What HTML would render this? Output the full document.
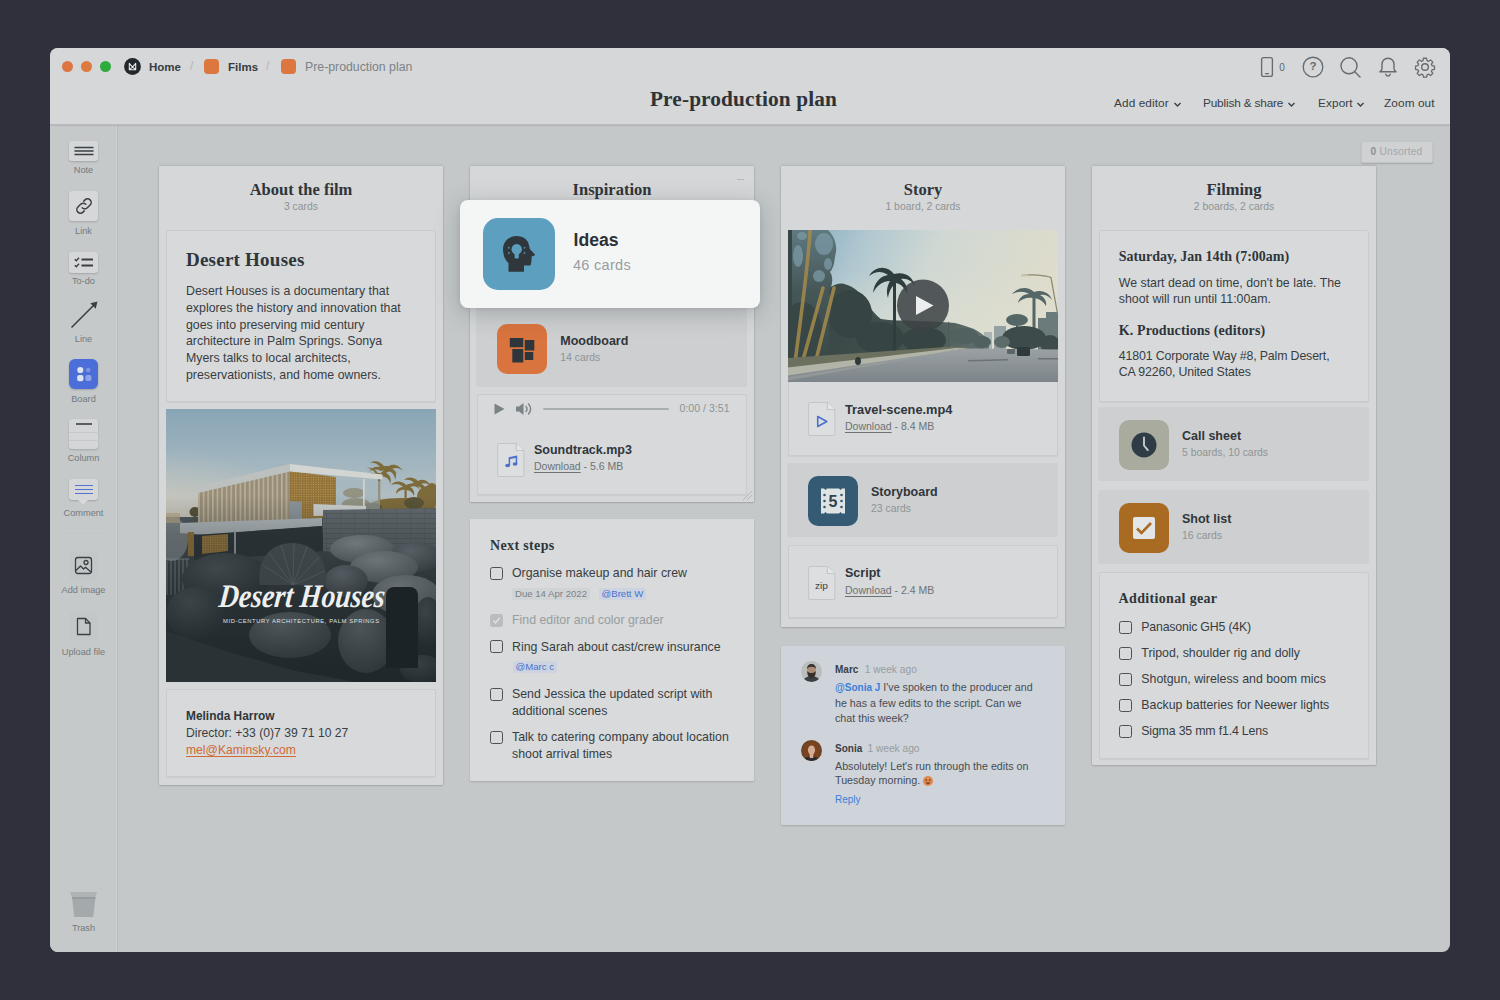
<!DOCTYPE html>
<html lang="en">
<head>
<meta charset="utf-8">
<title>Pre-production plan</title>
<style>
*{box-sizing:border-box;margin:0;padding:0}
html,body{width:1500px;height:1000px;overflow:hidden}
body{background:#2f303b;font-family:"Liberation Sans",Arial,sans-serif;color:#31373c;position:relative;-webkit-font-smoothing:antialiased}
.abs{position:absolute}
.serif{font-family:"Liberation Serif","DejaVu Serif",serif;font-weight:700}
#win{position:absolute;left:50px;top:48px;width:1400px;height:904px;border-radius:8px;background:#c4c8c9;overflow:hidden}
#hdr{position:absolute;left:0;top:0;width:1400px;height:77px;background:#d5d7d8;border-bottom:1px solid #b7babc;box-shadow:0 1px 1.5px rgba(0,0,0,.10);z-index:5}
#side{position:absolute;left:0;top:77px;width:68px;height:827px;background:#c5c9ca;border-right:1px solid #b9bdbf;box-shadow:inset -2px 0 0 -1px #cdd0d1}
.t{position:absolute;white-space:nowrap;line-height:1}
.dot{position:absolute;width:11.4px;height:11.4px;border-radius:50%;top:12.6px}
.crumb{font-size:11.5px;font-weight:700;color:#363c41;top:13.5px}
.sl{color:#b3b7b9;font-size:12px;top:12px;font-weight:400}
.sq{position:absolute;width:15px;height:15px;border-radius:4px;background:#dc773f;top:11.2px}
.menu{font-size:11.8px;color:#3a4045;top:50px;letter-spacing:.1px}
.tool{position:absolute;left:18.5px;width:29.5px;background:#d5d7d8;border-radius:3px;box-shadow:0 1px 2px rgba(0,0,0,.18)}
.tl{position:absolute;left:0;width:67px;text-align:center;font-size:9.2px;color:#737a7d;line-height:1}
.col{position:absolute;width:284px;background:#d5d7d8;box-shadow:0 0 0 .5px rgba(0,0,0,.05),0 -1px 3px rgba(0,0,0,.07),0 1px 2px rgba(0,0,0,.14);border-radius:1px}
.ct{position:absolute;left:0;width:284px;text-align:center;font-size:16.5px;top:15.6px;line-height:1;color:#2f353a}
.cs{position:absolute;left:0;width:284px;text-align:center;font-size:10.4px;top:36px;line-height:1;color:#8d9497}
.card{position:absolute;left:7px;width:270px;background:#d7d9da;border:1px solid #c9cccd;border-radius:2px;box-shadow:0 1px 1px rgba(0,0,0,.05)}
.bcard{position:absolute;left:7px;width:270px;background:#cdcfd0;border-radius:2px;box-shadow:-.8px 0 0 #cdcfd0}
.p{position:absolute;font-size:12.35px;line-height:16.8px;color:#373d42;white-space:nowrap}
.h{position:absolute;white-space:nowrap;line-height:1;color:#2f353a}
.cb{position:absolute;width:13px;height:13px;border:1.3px solid #4b5155;border-radius:2.5px}
.bt{position:absolute;font-size:12.5px;font-weight:700;color:#30363b;line-height:1;white-space:nowrap}
.bs{position:absolute;font-size:10.4px;color:#8d9497;line-height:1;white-space:nowrap}
.ic{position:absolute;width:50px;height:50px;border-radius:10px}
.dl{position:absolute;font-size:10.5px;color:#6c7377;line-height:1;white-space:nowrap;margin-top:-.5px}
.dl u{text-decoration:underline;text-underline-offset:1.5px}
</style>
</head>
<body>
<div id="win">
<!-- HEADER -->
<div id="hdr">
  <div class="dot" style="left:11.700px;background:#dd7540"></div>
  <div class="dot" style="left:31px;background:#dd7a3d"></div>
  <div class="dot" style="left:49.5px;background:#2eab3c"></div>
  <svg class="abs" style="left:74px;top:9.5px" width="17" height="17" viewBox="0 0 17 17"><circle cx="8.500" cy="8.500" r="8.400" fill="#23282d"/><path d="M5.300 11.700V5.300L8.500 9.200L11.700 5.300V11.700ZM5.300 11.700L8.500 9.200L11.700 11.700" fill="none" stroke="#e9ebec" stroke-width="1.050" stroke-linejoin="round"/></svg>
  <div class="t crumb" style="left:99px">Home</div>
  <div class="t sl" style="left:140px">/</div>
  <div class="sq" style="left:154.200px"></div>
  <div class="t crumb" style="left:178px">Films</div>
  <div class="t sl" style="left:216px">/</div>
  <div class="sq" style="left:230.600px"></div>
  <div class="t crumb" style="left:255px;color:#7c8387;font-weight:400;font-size:12.300px;top:13px">Pre-production plan</div>
  <div class="t serif" id="title" style="left:0;width:1387px;text-align:center;top:40.500px;font-size:21.300px;letter-spacing:.14px;color:#2d3338">Pre-production plan</div>
  <!-- right icons -->
  <svg class="abs" style="left:1207px;top:6.500px" width="22" height="24" viewBox="0 0 22 24" fill="none" stroke="#666c70" stroke-width="1.350"><rect x="4.6" y="2.6" width="10.8" height="18.8" rx="2"/><path d="M8.5 18.6h3" stroke-linecap="round"/></svg>
  <div class="t" style="left:1229.200px;top:14.500px;font-size:10px;color:#5f666a">0</div>
  <svg class="abs" style="left:1251px;top:6.500px" width="24" height="24" viewBox="0 0 24 24" fill="none" stroke="#666c70" stroke-width="1.350"><circle cx="12" cy="12" r="9.8"/></svg>
  <div class="t" style="left:1259.500px;top:13.300px;font-size:11.500px;color:#666c70;font-weight:700">?</div>
  <svg class="abs" style="left:1288px;top:6.500px" width="24" height="24" viewBox="0 0 24 24" fill="none" stroke="#666c70" stroke-width="1.400" stroke-linecap="round"><circle cx="11" cy="10.8" r="8"/><path d="M17 17l5 5"/></svg>
  <svg class="abs" style="left:1326px;top:6.500px" width="24" height="24" viewBox="0 0 24 24" fill="none" stroke="#666c70" stroke-width="1.400" stroke-linecap="round" stroke-linejoin="round"><path d="M12 3.2c-3.6 0-6 2.7-6 6v4.2c0 1.600-.9 2.6-2.200 3.400h16.400c-1.300-.8-2.200-1.800-2.200-3.400V9.200c0-3.300-2.400-6-6-6z"/><path d="M9.800 19.300c.3 1.100 1.100 1.800 2.200 1.800s1.900-.7 2.200-1.800"/></svg>
  <svg class="abs" style="left:1363px;top:6.500px" width="24" height="24" viewBox="0 0 24 24" fill="none" stroke="#666c70" stroke-width="1.400" stroke-linejoin="round"><circle cx="12" cy="12" r="3.300"/><path d="M10.300 2.500h3.400l.5 2.600 1.700.7 2.200-1.500 2.400 2.400-1.500 2.200.7 1.700 2.600.5v3.400l-2.600.5-.7 1.700 1.500 2.200-2.400 2.400-2.200-1.500-1.700.7-.5 2.600h-3.400l-.5-2.600-1.700-.7-2.200 1.500-2.400-2.400 1.500-2.200-.7-1.700-2.600-.5v-3.400l2.600-.5.7-1.700-1.500-2.200 2.400-2.400 2.200 1.500 1.700-.7z" transform="translate(12 12) scale(.92) translate(-12 -12)"/></svg>
  <!-- menu -->
  <div class="t menu" style="left:1064px">Add editor</div>
  <svg class="abs" style="left:1123px;top:53px" width="9" height="7" viewBox="0 0 9 7" fill="none" stroke="#3a4045" stroke-width="1.400"><path d="M1.500 2l3 3 3-3"/></svg>
  <div class="t menu" style="left:1153px;letter-spacing:-.16px">Publish &amp; share</div>
  <svg class="abs" style="left:1237px;top:53px" width="9" height="7" viewBox="0 0 9 7" fill="none" stroke="#3a4045" stroke-width="1.400"><path d="M1.500 2l3 3 3-3"/></svg>
  <div class="t menu" style="left:1268px">Export</div>
  <svg class="abs" style="left:1306px;top:53px" width="9" height="7" viewBox="0 0 9 7" fill="none" stroke="#3a4045" stroke-width="1.400"><path d="M1.500 2l3 3 3-3"/></svg>
  <div class="t menu" style="left:1334px">Zoom out</div>
</div>
<!-- SIDEBAR -->
<div id="side">
  <!-- coordinates relative to #side (page y - 125, page x - 50) -->
  <div class="tool" style="top:15.500px;height:20.500px"><svg style="position:absolute;left:0;top:-1px" width="30" height="22" viewBox="0 0 30 22" stroke="#3a4045" stroke-width="1.300"><path d="M5.500 7.500h19M5.500 11h19M5.500 14.500h19"/></svg></div>
  <div class="tl" style="top:40.800px">Note</div>
  <div class="tool" style="top:66px;height:30px"><svg width="30" height="30" viewBox="0 0 30 30" fill="none" stroke="#3a4045" stroke-width="1.500" stroke-linecap="round"><path d="M13.200 16.800a3.600 3.600 0 0 0 5.100 0l2.800-2.800a3.600 3.600 0 0 0-5.100-5.100l-1.200 1.200"/><path d="M16.800 13.200a3.600 3.600 0 0 0-5.100 0l-2.800 2.800a3.600 3.600 0 0 0 5.100 5.100l1.200-1.200"/></svg></div>
  <div class="tl" style="top:102px">Link</div>
  <div class="tool" style="top:127px;height:21px"><svg width="30" height="21" viewBox="0 0 30 21" fill="none" stroke="#3a4045" stroke-width="1.400"><path d="M12.500 7.500h11.500M12.500 13.500h11.500" stroke-width="1.800"/><path d="M5.800 7.200l1.500 1.500 2.700-3M5.800 13.200l1.500 1.500 2.700-3"/></svg></div>
  <div class="tl" style="top:152px">To-do</div>
  <svg class="abs" style="left:18px;top:174px" width="32" height="32" viewBox="0 0 32 32" fill="none" stroke="#3a4045" stroke-width="1.600"><path d="M3.500 28.500L27 5"/><path d="M29.500 2.500l-1.800 7.200-5.400-5.400z" fill="#3a4045" stroke="none"/></svg>
  <div class="tl" style="top:209.500px">Line</div>
  <div class="tool" style="top:234px;height:30px;background:#4b6ed8;border-radius:6px;box-shadow:0 1px 2px rgba(0,0,0,.2)"><svg width="30" height="30" viewBox="0 0 30 30"><circle cx="11.300" cy="11" r="3.100" fill="#dfe4f2"/><rect x="8.200" y="16" width="6.200" height="6.200" rx="2" fill="#dfe4f2"/><circle cx="19.200" cy="11" r="2.300" fill="#7b95e3"/><rect x="16.400" y="16" width="6" height="6" rx="1.800" fill="#8ea4e6"/></svg></div>
  <div class="tl" style="top:269.500px">Board</div>
  <div class="tool" style="top:294px;height:30px;background:#d4d6d7"><svg width="30" height="30" viewBox="0 0 30 30"><path d="M7 5h16" stroke="#3a4045" stroke-width="1.600"/><path d="M0 13.500h30M0 21.500h30" stroke="#c6c9ca" stroke-width="1"/></svg></div>
  <div class="tl" style="top:329px">Column</div>
  <div class="tool" style="top:354px;height:21px"><svg width="30" height="21" viewBox="0 0 30 21" stroke="#5372d4" stroke-width="1.200"><path d="M6 6.500h18M6 10.500h18M6 14.500h18"/></svg></div>
  <svg class="abs" style="left:28px;top:375px" width="10" height="5" viewBox="0 0 10 5"><path d="M0 0h10l-5 4.500z" fill="#d9dbdc"/></svg>
  <div class="tl" style="top:384px">Comment</div>
  <div class="abs" style="left:13px;top:408px;width:41px;height:1px;background:#c2c6c7"></div>
  <div class="abs" style="left:19px;top:426px;width:29px;height:29px;background:#c4c7c8;border-radius:3px"><svg width="29" height="29" viewBox="0 0 29 29" fill="none" stroke="#3a4045" stroke-width="1.300" stroke-linejoin="round"><rect x="6.500" y="6.500" width="16" height="16" rx="2.500"/><circle cx="17" cy="11.500" r="2"/><path d="M7 19.500l4.500-4.500 3 3 2-1.800 5.500 4.800"/></svg></div>
  <div class="tl" style="top:461px">Add image</div>
  <div class="abs" style="left:19px;top:487px;width:29px;height:29px;background:#c4c7c8;border-radius:3px"><svg width="29" height="29" viewBox="0 0 29 29" fill="none" stroke="#3a4045" stroke-width="1.300" stroke-linejoin="round"><path d="M8.500 6.500h8l4.500 4.500v11.500h-12.500z"/><path d="M16.500 6.500v4.500h4.500"/></svg></div>
  <div class="tl" style="top:522.500px">Upload file</div>
  <svg class="abs" style="left:19px;top:766px" width="30" height="27" viewBox="0 0 30 27"><path d="M1 1h27l-1.500 5h-24z" fill="#aeb3b5"/><path d="M3 6h23.500l-2.300 20h-19z" fill="#a4a9ab"/><path d="M3 6h23.500l-.3 2h-23z" fill="#979c9e"/></svg>
  <div class="tl" style="top:799px">Trash</div>
</div>
<!-- CANVAS -->
<div id="canvas" class="abs" style="left:0;top:0;width:1400px;height:904px">

<!-- COLUMN 1 : About the film -->
<div class="col" style="left:109px;top:118px;height:619px">
  <div class="ct serif">About the film</div>
  <div class="cs">3 cards</div>
  <div class="card" style="top:64px;height:172px">
    <div class="h serif" style="left:19px;top:19px;font-size:19px;letter-spacing:.23px">Desert Houses</div>
    <div class="p" style="left:19px;top:52px">Desert Houses is a documentary that<br>explores the history and innovation that<br>goes into preserving mid century<br>architecture in Palm Springs. Sonya<br>Myers talks to local architects,<br>preservationists, and home owners.</div>
  </div>
  <div class="abs" id="img1" style="left:7px;top:243px;width:270px;height:273px;overflow:hidden;background:#2a3236">
  <svg width="270" height="273" viewBox="0 0 270 273">
    <defs>
      <linearGradient id="sky1" x1="0" y1="0" x2="0" y2="1"><stop offset="0" stop-color="#89a5b5"/><stop offset=".35" stop-color="#9db3be"/><stop offset=".8" stop-color="#bac3c5"/><stop offset="1" stop-color="#c3c5c1"/></linearGradient>
      <radialGradient id="glow1" cx="0" cy="1" r="1"><stop offset="0" stop-color="#d6cbb8" stop-opacity=".9"/><stop offset="1" stop-color="#d6cbb8" stop-opacity="0"/></radialGradient>
      <linearGradient id="rk" x1="0" y1="0" x2="0" y2="1"><stop offset="0" stop-color="#4f585d"/><stop offset=".45" stop-color="#343c41"/><stop offset="1" stop-color="#252c30"/></linearGradient>
      <linearGradient id="dk" x1="0" y1="0" x2="0" y2="1"><stop offset="0" stop-color="#1b2225" stop-opacity="0"/><stop offset=".22" stop-color="#1b2225" stop-opacity=".28"/><stop offset=".6" stop-color="#1b2225" stop-opacity=".4"/><stop offset="1" stop-color="#1b2225" stop-opacity=".5"/></linearGradient>
      <pattern id="slat" width="4.600" height="10" patternUnits="userSpaceOnUse"><rect width="4.600" height="10" fill="#988d76"/><rect x="0" width="1.600" height="10" fill="#b9b29d"/></pattern>
      <pattern id="perf" width="2.400" height="2.400" patternUnits="userSpaceOnUse"><rect width="2.400" height="2.400" fill="#93733a"/><circle cx="1.200" cy="1.200" r=".5" fill="#c9a95e"/></pattern>
      <pattern id="stone" width="14" height="5" patternUnits="userSpaceOnUse"><rect width="14" height="5" fill="#636b70"/><rect y="4.200" width="14" height=".8" fill="#545c61"/><rect x="6" width=".8" height="4.200" fill="#596166"/></pattern>
      <radialGradient id="r1" cx=".4" cy=".3" r=".8"><stop offset="0" stop-color="#949ba0"/><stop offset="1" stop-color="#5a6368"/></radialGradient>
      <radialGradient id="r2" cx=".4" cy=".3" r=".8"><stop offset="0" stop-color="#727a80"/><stop offset="1" stop-color="#3d464b"/></radialGradient>
      <radialGradient id="r3" cx=".4" cy=".3" r=".8"><stop offset="0" stop-color="#515a5f"/><stop offset="1" stop-color="#293135"/></radialGradient>
    </defs>
    <rect width="270" height="130" fill="url(#sky1)"/>
    <rect y="40" width="150" height="90" fill="url(#glow1)"/>
    <rect y="108" width="270" height="165" fill="url(#rk)"/>
    <!-- palms right -->
    <g fill="#7e6b3b"><path d="M213 66c-3-6-8-8-12-7 4 0 7 3 9 6-5-2-9-1-12 3 4-2 9-1 12 1 2-1 5-2 9-1 3 1 5 4 5 7 2-5 0-9-4-11 4-3 9-2 11 1-2-5-8-7-13-4z"/><rect x="212" y="64" width="2.200" height="38"/><path d="M240 76c-5-5-12-4-15 0 5-2 9-1 12 2-4 0-7 3-7 7 2-3 6-5 10-4 4 0 7 3 8 6 1-4-1-8-4-9 4-2 8 0 10 3-1-5-8-8-14-5z"/><rect x="238.500" y="78" width="2.200" height="24"/><ellipse cx="262" cy="88" rx="11" ry="11"/><ellipse cx="188" cy="84" rx="11" ry="5"/><ellipse cx="190" cy="95" rx="14" ry="6"/><ellipse cx="236" cy="97" rx="34" ry="8"/></g>
    <g fill="#7e6b3b"><path d="M222 60c-4-5-10-6-14-3 4-1 8 1 10 4-5-1-9 1-11 5 4-3 8-3 12-1 3-1 7-1 10 1 3 2 4 5 4 8 2-5 1-9-3-11 4-2 8-1 11 2-3-5-9-8-14-5z" transform="translate(-4 -3)"/><path d="M252 72c-4-4-10-5-14-1 4-1 8 0 10 3-4 0-8 3-8 7 3-4 7-5 11-4 4 1 7 4 8 8 1-5 0-9-4-10 4-2 8 0 10 3-2-6-8-9-13-6z"/><ellipse cx="266" cy="82" rx="6" ry="8"/></g><g fill="#5a5436"><ellipse cx="248" cy="94" rx="10" ry="6"/><ellipse cx="206" cy="98" rx="10" ry="4"/></g>
    <g fill="#55503a"><ellipse cx="29" cy="103" rx="5.500" ry="5"/><rect x="28.300" y="103" width="1.500" height="14"/></g>
    <!-- house upper -->
    <polygon points="32,83 124,62 124,111 32,116" fill="url(#slat)"/>
    <polygon points="124,62 170,68 170,108 124,111" fill="url(#perf)"/>
    <polygon points="124,92 136,93 136,110 124,111" fill="#8c959a"/>
    <polygon points="170,70 214,72 214,100 170,100" fill="#a3b5bd" opacity=".55"/>
    <polygon points="32,77.500 124,55 124,62.500 32,84" fill="#bcc0be"/>
    <polygon points="124,55 216.500,65.500 216.500,70.500 124,62.500" fill="#d3d5d2"/>
    <rect x="197" y="70" width="1.800" height="30" fill="#cfd2d0"/>
    <polygon points="147.500,95 200,97 200,106 147.500,107" fill="#cdd1cf"/>
    <!-- bush far left -->
    <ellipse cx="6" cy="130" rx="16" ry="22" fill="#7d8488"/>
    <rect x="0" y="104" width="14" height="10" fill="#b9a98a" opacity=".7"/>
    <!-- deck slab -->
    <polygon points="14,114 156,109 156,117 40,126 14,124" fill="#b4bcc0"/>
    <polygon points="28,126 156,117 158,142 28,152" fill="#2f363a"/>
    <polygon points="36,127 62,125 62,142 36,145" fill="url(#perf)"/>
    <rect x="22" y="123" width="6" height="24" fill="#9a763a"/>
    <rect x="68" y="122" width="2" height="24" fill="#9aa2a6"/>
    <!-- stone wall -->
    <polygon points="157,101 270,99 270,152 157,142" fill="url(#stone)"/>
    <!-- fence -->
    <g stroke="#aeb5b8" stroke-width=".8" opacity=".8"><path d="M1 150v36M5 150v36M9 150v36M13 150v36M17 150v36M21 150v36M0 150h23"/></g>
    <!-- rocks -->
    <ellipse cx="196" cy="140" rx="32" ry="14" fill="url(#r1)"/>
    <ellipse cx="250" cy="148" rx="26" ry="15" fill="url(#r2)"/>
    <ellipse cx="218" cy="158" rx="34" ry="16" fill="url(#r1)"/>
    <ellipse cx="240" cy="186" rx="34" ry="20" fill="url(#r1)"/>
    <ellipse cx="180" cy="172" rx="22" ry="16" fill="url(#r2)"/>
    <ellipse cx="60" cy="170" rx="44" ry="26" fill="url(#r3)"/>
    <ellipse cx="30" cy="204" rx="30" ry="26" fill="url(#r3)"/>
    <path d="M126 134c-24 0-36 20-32 42l66 0c3-22-10-42-34-42z" fill="#4c555a"/>
    <g stroke="#707981" stroke-width="1" fill="none" opacity=".7"><path d="M127 176l-30-20M127 176l-24-32M127 176l-12-40M127 176l1-42M127 176l14-38M127 176l26-28M127 176l32-14"/></g>
    <ellipse cx="124" cy="226" rx="41" ry="23" fill="url(#r2)"/>
    <ellipse cx="200" cy="232" rx="28" ry="32" fill="url(#r2)"/>
    <ellipse cx="262" cy="212" rx="14" ry="24" fill="url(#r3)"/>
    <ellipse cx="256" cy="260" rx="22" ry="14" fill="url(#r3)"/>
    <rect y="86" width="270" height="187" fill="url(#dk)"/>
    <path d="M220 186a8 8 0 0 1 8-8h16a8 8 0 0 1 8 8v73h-32z" fill="#1c2326"/>
    <polygon points="0,222 60,242 130,262 190,273 0,273" fill="#2a3236"/>
    <text x="52" y="198" textLength="166" lengthAdjust="spacingAndGlyphs" font-family="'Liberation Serif','DejaVu Serif',serif" font-style="italic" font-weight="700" font-size="33" fill="#eef0f0" transform="translate(135 198) skewX(-6) translate(-135 -198)">Desert Houses</text>
    <text x="57" y="214.200" textLength="156" lengthAdjust="spacing" font-family="'Liberation Sans',sans-serif" font-size="5.800" fill="#dfe2e3">MID-CENTURY ARCHITECTURE, PALM SPRINGS</text>
  </svg>
  </div>
  <div class="card" style="top:523px;height:88px">
    <div class="p" style="left:19px;top:17.500px;font-size:12.150px;line-height:17px"><b style="color:#30363b;font-size:11.900px">Melinda Harrow</b><br>Director: +33 (0)7 39 71 10 27<br><span style="color:#d06a36;text-decoration:underline;text-underline-offset:1.500px">mel@Kaminsky.com</span></div>
  </div>
</div>

<!-- COLUMN 2 : Inspiration -->
<div class="col" style="left:420px;top:118px;height:336px">
  <div class="ct serif">Inspiration</div>
  <div class="abs" style="left:267px;top:12.500px;width:7px;height:1.500px;background:#b4b8ba"></div>
  <!-- Moodboard -->
  <div class="bcard" style="top:138px;height:83px">
    <div class="ic" style="left:20px;top:20px;background:#d9743f">
      <svg width="50" height="50" viewBox="0 0 50 50" fill="#2f363b"><rect x="12.800" y="14" width="13.500" height="9.300" rx=".5"/><rect x="27.800" y="16" width="9.500" height="10.500" rx=".5"/><rect x="15.300" y="25" width="11" height="13.500" rx=".5"/><rect x="27.800" y="28" width="8.500" height="8" rx=".5"/></svg>
    </div>
    <div class="bt" style="left:83.300px;top:31px">Moodboard</div>
    <div class="bs" style="left:83.300px;top:48.900px">14 cards</div>
  </div>
  <!-- Audio -->
  <div class="card" style="top:228px;height:101px">
    <svg class="abs" style="left:14px;top:7px" width="16" height="14" viewBox="0 0 16 14"><path d="M2.500 1.500l10 5.500-10 5.500z" fill="#7c8387"/></svg>
    <svg class="abs" style="left:36px;top:6px" width="20" height="16" viewBox="0 0 20 16" fill="none"><path d="M2 5.500h3l4.500-3.500v12l-4.500-3.500h-3z" fill="#7c8387"/><path d="M12 5.500a3.500 3.500 0 0 1 0 5M14.500 3a7 7 0 0 1 0 10" stroke="#7c8387" stroke-width="1.400" stroke-linecap="round"/></svg>
    <div class="abs" style="left:65px;top:13px;width:126px;height:2px;border-radius:1px;background:#a9aeb0"></div>
    <div class="t" style="left:201.500px;top:7.700px;font-size:10.600px;color:#8d9497">0:00 / 3:51</div>
    <svg class="abs" style="left:17.500px;top:47px" width="30" height="36" viewBox="0 0 28 36" preserveAspectRatio="none"><path d="M3 1.500h16l7 7v24.500a1.500 1.500 0 0 1-1.500 1.500h-21.500a1.500 1.500 0 0 1-1.500-1.500v-30a1.500 1.500 0 0 1 1.500-1.500z" fill="#dcdedf" stroke="#c3c6c8" stroke-width="1"/><path d="M19 1.500v7h7" fill="#e6e8e8" stroke="#c3c6c8" stroke-width="1"/><g fill="#4c6fd0"><ellipse cx="10.800" cy="23.500" rx="2.200" ry="1.700"/><ellipse cx="17.800" cy="22" rx="2.200" ry="1.700"/><path d="M11.800 15.200l8-1.700v8.500h-1.400v-6l-5.200 1.100v6.400h-1.400z"/></g></svg>
    <div class="bt" style="left:56px;top:48.500px">Soundtrack.mp3</div>
    <div class="dl" style="left:56px;top:66px"><u>Download</u> - 5.6 MB</div>
  </div>
  <svg class="abs" style="left:271px;top:323px" width="12" height="12" viewBox="0 0 12 12" stroke="#b4b8ba" stroke-width="1"><path d="M2 11L11 2M6 11l5-5"/></svg>
</div>
<!-- Ideas popup -->
<div class="abs" id="ideas" style="left:410px;top:152px;width:300px;height:108px;border-radius:8px;background:#f4f6f6;box-shadow:0 5px 24px rgba(40,50,55,.25),0 1px 4px rgba(40,50,55,.10)">
  <div class="abs" style="left:23px;top:18px;width:72px;height:72px;border-radius:15px;background:#5d9fbe">
    <svg width="72" height="72" viewBox="0 0 72 72"><path d="M25.500 53.800V45C22 42 20 37 20 31.500C20 24 25.500 18 33.500 18C40.500 18 45.500 22 46.300 28.500L46.800 31L51.800 36.300C52 37.200 51.300 37.800 50.300 38L48.600 38.400V41.500L48 46C47.800 47 47 47.500 46 47.500H41V53.800Z" fill="#2f373d"/><circle cx="33.700" cy="31.200" r="5.200" fill="#5d9fbe"/><rect x="31.600" y="34" width="4.200" height="6.500" rx="1" fill="#5d9fbe"/><g fill="#5d9fbe" opacity=".75"><circle cx="25.800" cy="29.700" r="1"/><circle cx="25.800" cy="35" r="1"/><circle cx="41.500" cy="29.700" r="1"/><circle cx="41.500" cy="35" r="1"/></g></svg>
  </div>
  <div class="t" style="left:113.500px;top:32px;font-size:17.600px;font-weight:700;color:#2b3136">Ideas</div>
  <div class="t" style="left:113px;top:57.500px;font-size:14.500px;letter-spacing:.3px;color:#979da0">46 cards</div>
</div>
<!-- Next steps -->
<div class="abs" id="next" style="left:420px;top:471px;width:284px;height:262px;background:#d8dadb;box-shadow:0 1px 2px rgba(0,0,0,.16);border-radius:1px">
  <div class="h serif" style="left:20px;top:19.700px;font-size:14px;letter-spacing:.36px">Next steps</div>
  <div class="cb" style="left:20px;top:48px"></div>
  <div class="p" style="left:42px;top:45.500px">Organise makeup and hair crew</div>
  <div class="t" style="left:42px;top:68px;font-size:9.600px;color:#7b8286;background:#d1d4d5;padding:1.500px 3px;border-radius:2px;top:68.500px">Due 14 Apr 2022</div>
  <div class="t" style="left:128.500px;top:68.500px;font-size:9.600px;color:#4a6fcf;background:#cdd4e0;padding:1.500px 3px;border-radius:2px">@Brett W</div>
  <div class="cb" style="left:20px;top:95px;border-color:#b9bdbf;background:#b9bdbf"><svg class="abs" style="left:0;top:0" width="11" height="11" viewBox="0 0 11 11" fill="none" stroke="#dfe1e2" stroke-width="1.500"><path d="M2.200 5.500l2.300 2.300 4.300-5"/></svg></div>
  <div class="p" style="left:42px;top:93px;color:#979da0">Find editor and color grader</div>
  <div class="cb" style="left:20px;top:121px"></div>
  <div class="p" style="left:42px;top:119.500px">Ring Sarah about cast/crew insurance</div>
  <div class="t" style="left:42.500px;top:141.500px;font-size:9.600px;color:#4a6fcf;background:#cdd4e0;padding:1.500px 3px;border-radius:2px">@Marc c</div>
  <div class="cb" style="left:20px;top:169px"></div>
  <div class="p" style="left:42px;top:167.100px">Send Jessica the updated script with<br>additional scenes</div>
  <div class="cb" style="left:20px;top:212px"></div>
  <div class="p" style="left:42px;top:210.100px">Talk to catering company about location<br>shoot arrival times</div>
</div>

<!-- COLUMN 3 : Story -->
<div class="col" style="left:731px;top:118px;height:461px">
  <div class="ct serif">Story</div>
  <div class="cs">1 board, 2 cards</div>
  <div class="card" style="top:64px;height:225.500px">
    <div class="abs" id="img2" style="left:-1px;top:-1px;width:270px;height:152px;overflow:hidden;background:#8e979b">
    <svg width="270" height="152" viewBox="0 0 270 152">
      <defs>
        <linearGradient id="sky2" x1="0" y1="0" x2="1" y2=".25"><stop offset="0" stop-color="#7ea6bd"/><stop offset=".28" stop-color="#b0c7d0"/><stop offset=".55" stop-color="#d0d8d3"/><stop offset="1" stop-color="#dedccb"/></linearGradient>
        <linearGradient id="haze" x1="0" y1="0" x2="0" y2="1"><stop offset="0" stop-color="#dfe0d2" stop-opacity="0"/><stop offset="1" stop-color="#dfe0d2" stop-opacity=".75"/></linearGradient>
        <linearGradient id="road" x1="0" y1="0" x2="0" y2="1"><stop offset="0" stop-color="#9ba1a3"/><stop offset="1" stop-color="#7c848a"/></linearGradient>
        <linearGradient id="tr" x1="0" y1="0" x2="1" y2="0"><stop offset="0" stop-color="#3a4847"/><stop offset=".5" stop-color="#44524f"/><stop offset="1" stop-color="#62726f"/></linearGradient>
      </defs>
      <rect width="270" height="152" fill="url(#sky2)"/>
      <rect x="40" y="40" width="230" height="85" fill="url(#haze)"/>
      <!-- right: buildings, palms, lamp -->
      <g fill="#93a1a2"><rect x="206" y="96" width="12" height="26"/><rect x="196" y="102" width="8" height="18" fill="#a9b4b3"/></g>
      <g fill="#6b7b7b"><rect x="250" y="88" width="20" height="34"/><rect x="258" y="82" width="12" height="8"/></g>
      <g fill="#546665"><path d="M246 62c-6-6-16-5-22 2 6-3 12-3 17 0-6 0-10 4-11 9 3-4 9-6 15-5 6 0 11 4 13 8 1-5-2-9-6-11 5-1 9 1 12 5-2-7-10-11-18-8z"/><rect x="244.500" y="64" width="3" height="50"/><ellipse cx="229" cy="90" rx="11" ry="6"/><rect x="228" y="90" width="2" height="26"/></g>
      <g fill="#3d4c4b"><ellipse cx="236" cy="108" rx="22" ry="12"/><ellipse cx="262" cy="114" rx="10" ry="9"/><ellipse cx="214" cy="112" rx="8" ry="6" fill="#5c6c6a"/></g>
      <path d="M233.500 45.500c10-1.200 24-.3 29.500 2.200l6.500 36" fill="none" stroke="#8f8a70" stroke-width="1.300"/>
      <rect x="233" y="44.500" width="7" height="2" rx="1" fill="#c9c6ae"/>
      <!-- mid trees -->
      <path d="M41 58c6-4 12-6 17-3.500 7 2 13 7 18 13.500 5 8 10 16 17 21 10 2 22 1 35 2 14 0 26 1 39 2 8 2 13 4 19 6 6 3 11 7 15 11.600l0 8-160 12z" fill="url(#tr)"/>
      <g fill="#364443"><ellipse cx="62" cy="84" rx="22" ry="24"/><ellipse cx="92" cy="108" rx="24" ry="16"/><ellipse cx="136" cy="110" rx="22" ry="13"/></g>
      <g fill="#51615f"><ellipse cx="176" cy="106" rx="14" ry="8"/><ellipse cx="194" cy="112" rx="9" ry="6"/></g>
      <!-- center palm -->
      <g fill="#2f3d3e"><path d="M106 44c-7-9-19-8-25 2 7-5 13-5 19-1-8 1-14 8-15 18 4-8 10-12 17-12-3 5-4 11-2 17 1-7 4-12 8-15 5 1 9 5 11 11 1-7-2-12-6-15 6-1 11 2 14 7-2-9-10-15-21-12z"/><rect x="105" y="46" width="3" height="84"/></g>
      <rect x="160" y="92" width="1.200" height="30" fill="#4b5a59"/>
      <!-- left trees -->
      <linearGradient id="lt" x1="0" y1="0" x2="0" y2="1"><stop offset="0" stop-color="#607a81"/><stop offset=".45" stop-color="#465758"/><stop offset="1" stop-color="#3a4847"/></linearGradient><g fill="url(#lt)"><path d="M0 0h40c6 6 9 14 8 22-2 8-1 14-6 20 4 6 2 14-1 20 4 10 2 20 0 30v40h-41z"/></g>
      <g fill="#7d9aa6" opacity=".75"><ellipse cx="36" cy="14" rx="9" ry="11"/><ellipse cx="10" cy="26" rx="5" ry="11"/><ellipse cx="31" cy="46" rx="6" ry="6"/><ellipse cx="14" cy="6" rx="5" ry="4"/><ellipse cx="40" cy="34" rx="4" ry="6"/></g>
      <g fill="#384646"><ellipse cx="14" cy="102" rx="20" ry="30"/><rect x="0" y="0" width="4" height="152"/></g>
      <g stroke="#a58b4a" stroke-width="3.600" opacity=".85" stroke-linecap="round"><path d="M22 1C20 40 12 90 5 150"/><path d="M35 58L15 130"/><path d="M46 58L25 142"/></g>
      <!-- ground -->
      <polygon points="0,128 165,116.500 182,117 0,140" fill="#6c705f"/>
      <polygon points="0,144 178,118.500 270,119.500 270,152 0,152" fill="url(#road)"/>
      <polygon points="0,137.500 168,118 180,118.300 0,145.500" fill="#b3b4a8"/>
      <polygon points="0,147 120,128 128,128 0,150.500" fill="#9da19c" opacity=".6"/>
      <rect x="229" y="117" width="13" height="9" rx="1.500" fill="#2e3a3c"/>
      <rect x="219" y="119" width="8" height="5" rx="1" fill="#5a6668"/>
      <path d="M250 128h20v1.500h-20zM180 130l40-1v1.500l-40 1z" fill="#6b7378"/>
      <ellipse cx="70" cy="131" rx="3" ry="4" fill="#2e3a3c"/>
      <!-- play button -->
      <circle cx="135" cy="75.500" r="26" fill="#3c4245" opacity=".86"/>
      <path d="M128 66l17.500 9.500-17.500 9.500z" fill="#eceeee"/>
    </svg>
    </div>
    <svg class="abs" style="left:17.500px;top:170px" width="30" height="36" viewBox="0 0 28 36" preserveAspectRatio="none"><path d="M3 1.500h16l7 7v24.500a1.500 1.500 0 0 1-1.500 1.500h-21.500a1.500 1.500 0 0 1-1.500-1.500v-30a1.500 1.500 0 0 1 1.500-1.500z" fill="#dcdedf" stroke="#c3c6c8" stroke-width="1"/><path d="M19 1.500v7h7" fill="#e6e8e8" stroke="#c3c6c8" stroke-width="1"/><path d="M10 15.500l8.500 5-8.500 5z" fill="none" stroke="#4c6fd0" stroke-width="1.500" stroke-linejoin="round"/></svg>
    <div class="bt" style="left:56px;top:172.500px;font-size:12.800px">Travel-scene.mp4</div>
    <div class="dl" style="left:56px;top:190px"><u>Download</u> - 8.4 MB</div>
  </div>
  <div class="bcard" style="top:297px;height:74px">
    <div class="ic" style="left:20px;top:13px;background:#345a74">
      <svg width="50" height="50" viewBox="0 0 50 50"><path d="M13 12.500h3l1.500 1.500 1.500-1.500h12l1.500 1.500 1.500-1.500h3v25h-3l-1.500-1.500-1.500 1.500h-12l-1.500-1.500-1.500 1.500h-3z" fill="#e0e3e4"/><g fill="#345a74"><circle cx="16.500" cy="19" r="1.300"/><circle cx="16.500" cy="25" r="1.300"/><circle cx="16.500" cy="31" r="1.300"/><circle cx="33.500" cy="19" r="1.300"/><circle cx="33.500" cy="25" r="1.300"/><circle cx="33.500" cy="31" r="1.300"/></g><text x="25" y="30.500" text-anchor="middle" font-family="'Liberation Sans',sans-serif" font-weight="700" font-size="16" fill="#2f444f">5</text></svg>
    </div>
    <div class="bt" style="left:83px;top:22.500px">Storyboard</div>
    <div class="bs" style="left:83px;top:40.500px">23 cards</div>
  </div>
  <div class="card" style="top:379px;height:73px">
    <svg class="abs" style="left:17.500px;top:19px" width="30" height="36" viewBox="0 0 28 36" preserveAspectRatio="none"><path d="M3 1.500h16l7 7v24.500a1.500 1.500 0 0 1-1.500 1.500h-21.500a1.500 1.500 0 0 1-1.500-1.500v-30a1.500 1.500 0 0 1 1.500-1.500z" fill="#dcdedf" stroke="#c3c6c8" stroke-width="1"/><path d="M19 1.500v7h7" fill="#e6e8e8" stroke="#c3c6c8" stroke-width="1"/><text x="13.500" y="24.500" text-anchor="middle" font-family="'Liberation Sans',sans-serif" font-size="9.500" fill="#3a4045">zip</text></svg>
    <div class="bt" style="left:56px;top:21px">Script</div>
    <div class="dl" style="left:56px;top:39px"><u>Download</u> - 2.4 MB</div>
  </div>
</div>
<!-- Comments -->
<div class="abs" id="cmt" style="left:731px;top:598px;width:284px;height:179px;background:#cfd3da;box-shadow:0 1px 2px rgba(0,0,0,.16);border-radius:1px">
  <svg class="abs" style="left:20px;top:15px" width="21" height="21" viewBox="0 0 21 21"><defs><clipPath id="av"><circle cx="10.500" cy="10.500" r="10.500"/></clipPath></defs><g clip-path="url(#av)"><rect width="21" height="21" fill="#b9bdbc"/><ellipse cx="10.500" cy="22" rx="9" ry="7" fill="#3a3f42"/><ellipse cx="10.500" cy="9.500" rx="4.300" ry="5.200" fill="#a98d78"/><path d="M6.200 10c0 5 2 7 4.300 7s4.300-2 4.300-7c-1 1.500-2.600 2-4.300 2s-3.300-.5-4.300-2z" fill="#35302c"/><path d="M6 8c0-3.500 2-5 4.500-5s4.500 1.500 4.500 5c-1-1.600-2.500-2.300-4.500-2.300s-3.500.7-4.500 2.300z" fill="#3a3431"/></g></svg>
  <div class="t" style="left:54px;top:19.200px;font-size:10px;font-weight:700;color:#3a4045">Marc</div>
  <div class="t" style="left:83.700px;top:19.200px;font-size:10.200px;color:#969da1">1 week ago</div>
  <div class="p" style="left:54px;top:34px;font-size:10.700px;line-height:14.900px;color:#474d52"><span style="color:#3b80d9;font-weight:700;font-size:10px">@Sonia J</span> I've spoken to the producer and<br>he has a few edits to the script. Can we<br>chat this week?</div>
  <svg class="abs" style="left:20px;top:94px" width="21" height="21" viewBox="0 0 21 21"><g clip-path="url(#av)"><rect width="21" height="21" fill="#6d4526"/><ellipse cx="10.500" cy="11" rx="7.500" ry="9.500" fill="#7a431f"/><ellipse cx="10.500" cy="22" rx="8" ry="6" fill="#2d2a2a"/><ellipse cx="10.500" cy="10" rx="3.600" ry="4.600" fill="#d4ad92"/><rect x="8.700" y="13" width="3.600" height="5" fill="#d4ad92"/></g></svg>
  <div class="t" style="left:54px;top:97.600px;font-size:10px;font-weight:700;color:#3a4045">Sonia</div>
  <div class="t" style="left:86.400px;top:97.600px;font-size:10.200px;color:#969da1">1 week ago</div>
  <div class="p" style="left:54px;top:112.500px;font-size:10.700px;line-height:14.900px;color:#474d52">Absolutely! Let's run through the edits on<br>Tuesday morning.</div>
  <svg class="abs" style="left:141.300px;top:129.400px" width="12" height="12" viewBox="0 0 12 12"><circle cx="6" cy="6" r="5" fill="#e08a52"/><circle cx="4.200" cy="5" r=".9" fill="#8a4a22"/><circle cx="7.800" cy="5" r=".9" fill="#8a4a22"/><path d="M3.500 7.300a2.600 2.600 0 0 0 5 0z" fill="#8a4a22"/></svg>
  <div class="t" style="left:54px;top:148.700px;font-size:10px;color:#3b80d9">Reply</div>
</div>

<!-- COLUMN 4 : Filming -->
<div class="col" style="left:1042px;top:118px;height:599px">
  <div class="ct serif">Filming</div>
  <div class="cs">2 boards, 2 cards</div>
  <div class="card" style="top:64px;height:171.500px">
    <div class="h serif" style="left:18.800px;top:19.200px;font-size:14px">Saturday, Jan 14th (7:00am)</div>
    <div class="p" style="left:18.800px;top:43.500px">We start dead on time, don't be late. The<br>shoot will run until 11:00am.</div>
    <div class="h serif" style="left:18.800px;top:93.200px;font-size:14px;letter-spacing:.1px">K. Productions (editors)</div>
    <div class="p" style="left:18.800px;top:116.700px;letter-spacing:-.14px">41801 Corporate Way #8, Palm Desert,<br>CA 92260, United States</div>
  </div>
  <div class="bcard" style="top:241px;height:74px">
    <div class="ic" style="left:20px;top:13px;background:#a9ab9f">
      <svg width="50" height="50" viewBox="0 0 50 50"><circle cx="25" cy="25" r="12.500" fill="#2f3b45"/><path d="M25 17.500v8l3.800 4.600" fill="none" stroke="#c6cbcd" stroke-width="1.900" stroke-linecap="round" stroke-linejoin="round"/></svg>
    </div>
    <div class="bt" style="left:83px;top:22.500px">Call sheet</div>
    <div class="bs" style="left:83px;top:40.500px">5 boards, 10 cards</div>
  </div>
  <div class="bcard" style="top:324px;height:74px">
    <div class="ic" style="left:20px;top:13px;background:#a96a22">
      <svg width="50" height="50" viewBox="0 0 50 50"><rect x="14" y="14" width="22" height="22" rx="2" fill="#e3e5e6"/><path d="M18 25.500l4.500 4.500 9.500-10" fill="none" stroke="#a96a22" stroke-width="2.600"/></svg>
    </div>
    <div class="bt" style="left:83px;top:22.500px">Shot list</div>
    <div class="bs" style="left:83px;top:40.500px">16 cards</div>
  </div>
  <div class="card" style="top:406px;height:186.500px">
    <div class="h serif" style="left:18.600px;top:19px;font-size:14px;letter-spacing:.34px">Additional gear</div>
    <div class="cb" style="left:18.900px;top:47.5px"></div>
    <div class="p" style="left:41.300px;top:45.6px;letter-spacing:-.2px">Panasonic GH5 (4K)</div>
    <div class="cb" style="left:18.900px;top:73.5px"></div>
    <div class="p" style="left:41.300px;top:71.6px">Tripod, shoulder rig and dolly</div>
    <div class="cb" style="left:18.900px;top:99.5px"></div>
    <div class="p" style="left:41.300px;top:97.6px">Shotgun, wireless and boom mics</div>
    <div class="cb" style="left:18.900px;top:125.5px"></div>
    <div class="p" style="left:41.300px;top:123.6px">Backup batteries for Neewer lights</div>
    <div class="cb" style="left:18.900px;top:151.5px"></div>
    <div class="p" style="left:41.300px;top:149.6px;letter-spacing:-.18px">Sigma 35 mm f1.4 Lens</div>
  </div>
</div>
<!-- Unsorted -->
<div class="abs" style="left:1310.500px;top:92.500px;width:72px;height:22.500px;border:1px solid #c3c6c8;border-radius:2px;background:#cfd1d3;box-shadow:0 1px 1.500px rgba(0,0,0,.16)">
  <div class="t" style="left:0;width:70px;text-align:center;top:5px;font-size:10.200px;letter-spacing:.2px;color:#a3a8aa"><b style="color:#8c9295">0</b> Unsorted</div>
</div>
</div>
</div>
</body>
</html>
